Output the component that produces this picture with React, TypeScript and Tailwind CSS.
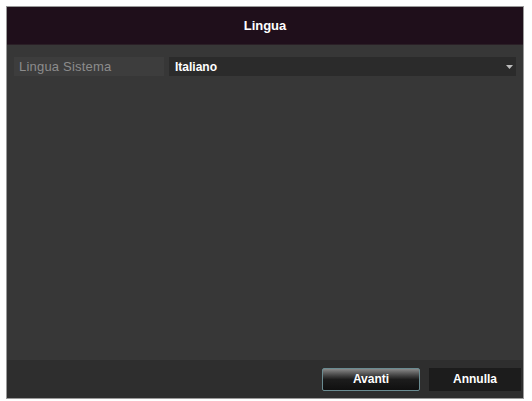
export default function App() {
  return (
    <div className="w-[532px] h-[401px] bg-white pt-[6px] pl-[6px] pr-[8px] pb-[2px] font-['Liberation_Sans',Arial,sans-serif]">
      <div className="h-full flex flex-col bg-[#363636] border border-[#9a9a9a]">
        {/* title */}
        <div className="h-[38px] shrink-0 bg-[#1f0f1b] flex items-center justify-center border-b border-[#2a1f26]">
          <span className="text-white text-[13px] font-bold">Lingua</span>
        </div>

        <div className="flex-1 bg-[#373737] pt-[12px] px-[7px]">
          <div className="flex h-[19px] items-stretch">
            <div className="w-[150px] bg-[#3d3d3d] flex items-center pl-[5px] text-[#8c8c8c] text-[13px] tracking-[0.2px]">
              Lingua Sistema
            </div>
            <div className="flex-1 ml-[5px] bg-[#2b2b2b] flex items-center justify-between pl-[6px] pr-[3px]">
              <span className="text-white text-[12px] font-bold">Italiano</span>
              <svg width="7" height="4" viewBox="0 0 7 4">
                <path d="M0 0 L7 0 L3.5 4 Z" fill="#bdbdbd" />
              </svg>
            </div>
          </div>
        </div>

        {/* footer */}
        <div className="h-[38px] shrink-0 bg-[#2e2e2e] flex items-center justify-end gap-[9px] pr-[2px]">
          <button className="w-[98px] h-[23px] rounded-[2px] border border-[#6a8c92] bg-gradient-to-b from-[#8a8a8a] via-[#1c1c1c] to-[#101010] text-white text-[12px] font-bold">
            Avanti
          </button>
          <button className="w-[92px] h-[23px] bg-[#1c1c1c] text-white text-[12px] font-bold">
            Annulla
          </button>
        </div>
      </div>
    </div>
  );
}
